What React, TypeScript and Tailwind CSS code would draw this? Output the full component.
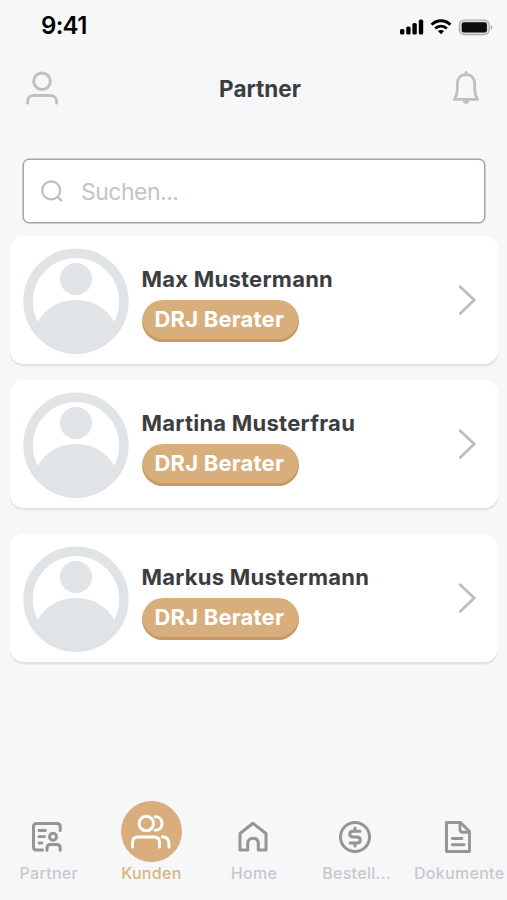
import type { ReactNode } from "react";

const partners = [
  { name: "Max Mustermann", role: "DRJ Berater", spacing: "mt-[13px]" },
  { name: "Martina Musterfrau", role: "DRJ Berater", spacing: "mt-[16px]" },
  { name: "Markus Mustermann", role: "DRJ Berater", spacing: "mt-[26px]" },
];

function StatusBar() {
  return (
    <div className="flex h-[52px] items-center justify-between pl-[41px] pr-[14px] text-black">
      <span className="text-[24px] font-semibold leading-none tracking-[-0.7px]">9:41</span>
      <div className="flex items-center pt-[2px]">
        <svg width="26" height="18" viewBox="0 0 26 18" fill="currentColor">
          <rect x="1" y="11" width="4.4" height="5.6" rx="1.6" />
          <rect x="7.2" y="8.4" width="4.4" height="8.2" rx="1.6" />
          <rect x="13.4" y="5" width="4.4" height="11.6" rx="1.6" />
          <rect x="19.8" y="1.6" width="4.4" height="15" rx="1.6" />
        </svg>
        <svg className="ml-[5px]" width="22" height="18" viewBox="0 0 22 18" fill="none" stroke="currentColor">
          <path d="M1.6 6.8C6.8 1.4 15.2 1.4 20.4 6.8" strokeWidth="2.9" />
          <path d="M5.2 10.5C8.4 7.2 13.6 7.2 16.8 10.5" strokeWidth="2.8" />
          <path d="M7.9 13.1C9.7 11.5 12.3 11.5 14.1 13.1L11 16.3Z" fill="currentColor" stroke="none" />
        </svg>
        <svg className="ml-[6px]" width="35" height="18" viewBox="0 0 35 18">
          <rect x="1.3" y="2" width="30" height="14.6" rx="4.8" fill="#d9dadb" stroke="#a9aaab" strokeWidth="1.1" />
          <rect x="3.7" y="4.2" width="25.2" height="10.2" rx="2.2" fill="#0c0c0c" />
          <path d="M32.8 7V12C34.8 11 34.8 8 32.8 7Z" fill="#a9aaab" />
        </svg>
      </div>
    </div>
  );
}

function Header() {
  return (
    <header className="flex h-[72px] items-center justify-between pl-[25px] pr-[27px] text-[#bfc0c1]">
      <svg width="34" height="34" viewBox="0 0 34 34" fill="none" stroke="currentColor" strokeWidth="3">
        <circle cx="17" cy="10.3" r="8.3" />
        <path d="M2.6 32V30.5C2.6 26.8 5.2 24.6 8.6 24.6H25.4C28.8 24.6 31.6 26.8 31.6 30.5V32" strokeLinecap="round" />
      </svg>
      <h1 className="ml-[9px] pt-[2px] text-[22.5px] font-bold leading-none text-[#3c3d3e]">Partner</h1>
      <svg width="28" height="34" viewBox="0 0 28 34" fill="none" stroke="currentColor" strokeWidth="2.8" strokeLinejoin="round">
        <path d="M14 3.6C8 3.6 5.3 8 5.3 13V18.5C5.3 22.5 4.2 25.5 2.4 28.4H25.6C23.8 25.5 22.7 22.5 22.7 18.5V13C22.7 8 20 3.6 14 3.6Z" />
        <path d="M14 1.5V4" strokeLinecap="round" />
        <path d="M10.5 29.5H17.5C17.2 31.6 16 32.8 14 32.8C12 32.8 10.8 31.6 10.5 29.5Z" fill="currentColor" stroke="none" />
      </svg>
    </header>
  );
}

function SearchField() {
  return (
    <div className="ml-[23px] mt-[35px] flex h-[64px] w-[462px] items-center rounded-[6px] border border-[#a2a4a6] bg-white pl-[16px] shadow-[0_0_0_0.5px_#a2a4a6]">
      <svg width="24" height="24" viewBox="0 0 24 24" fill="none" stroke="#bdbebf" strokeWidth="2.2">
        <circle cx="11.2" cy="11.4" r="9" />
        <path d="M17.6 17.8L22 22.2" strokeWidth="2.5" />
      </svg>
      <span className="ml-[17px] pt-[3px] text-[23px] leading-none tracking-[-0.5px] text-[#c3c4c5]">Suchen...</span>
    </div>
  );
}

function Avatar() {
  return (
    <svg width="106" height="106" viewBox="0 0 106 106" fill="#e0e4e6">
      <circle cx="53" cy="53.3" r="48" fill="none" stroke="#e0e4e6" strokeWidth="9.4" />
      <circle cx="53" cy="31" r="16" />
      <path d="M14 75C22 60 36 52 53 52C70 52 84 60 92 75C86 91 71 101 53 101C35 101 20 91 14 75Z" />
    </svg>
  );
}

function PartnerCard({ name, role, spacing }: (typeof partners)[number]) {
  return (
    <div className={`${spacing} mx-[10px] flex h-[128px] w-[488px] items-center rounded-[14px] bg-white pl-[13px] pr-[20px] pt-[2px] shadow-[0_2.5px_0_#e0e5e6]`}>
      <Avatar />
      <div className="ml-[12.5px] flex flex-col items-start">
        <span className="whitespace-nowrap pt-[6px] text-[22px] font-bold leading-[26px] tracking-[0.25px] text-[#3c3d3f]">{name}</span>
        <span className="mt-[8px] flex h-[42px] w-[157.5px] items-center justify-center whitespace-nowrap rounded-full bg-[#d8ae7c] pb-[3px] pr-[2px] text-[22px] font-bold tracking-[0.2px] text-white shadow-[inset_0_-3px_1px_#c69967]">
          {role}
        </span>
      </div>
      <svg className="mb-[2px] ml-auto" width="20" height="32" viewBox="0 0 20 32" fill="none" stroke="#bcbdbe" strokeWidth="2.8" strokeLinecap="round">
        <path d="M2.2 2.8L16.2 16L2.2 29.4" />
      </svg>
    </div>
  );
}

function TabItem({ label, active, children }: { label: string; active?: boolean; children: ReactNode }) {
  return (
    <div className="flex flex-col items-center">
      <div className={active ? "flex size-[61px] items-center justify-center rounded-full bg-[#d8ae7c] text-white" : "flex h-[61px] items-center justify-center pt-[10px] text-[#949596]"}>
        {children}
      </div>
      <span className={`mt-[1px] mr-[1px] whitespace-nowrap text-[16px] font-medium leading-[20px] tracking-[0.3px] ${active ? "text-[#d9b383]" : "text-[#c8c9cb]"}`}>{label}</span>
    </div>
  );
}

function TabBar() {
  return (
    <nav className="-mr-[4px] -ml-[2px] mt-auto grid h-[99px] grid-cols-5">
      <TabItem label="Partner">
        <svg className="mr-[4px]" width="32" height="32" viewBox="0 0 32 32" fill="none" stroke="currentColor" strokeWidth="3" strokeLinecap="round" strokeLinejoin="round">
          <path d="M29.2 9.5V5.5Q29.2 2.5 26.2 2.5H5.5Q2.5 2.5 2.5 5.5V26Q2.5 29 5.5 29H11.5" />
          <path d="M8 9.5H14.5M8 15.7H13.5M8 22H11" strokeWidth="2.8" />
          <circle cx="22" cy="15.7" r="3.5" />
          <path d="M16 29.2V27Q16 23.5 19.5 23.5H25.7Q29.2 23.5 29.2 27V29.2" />
        </svg>
      </TabItem>
      <TabItem label="Kunden" active>
        <svg className="mr-[2px]" width="42" height="36" viewBox="0 0 42 36" fill="none" stroke="currentColor" strokeWidth="3" strokeLinecap="round">
          <circle cx="16.3" cy="9.5" r="7.2" />
          <path d="M25.2 2.7C29.5 2.7 32 5.7 32 9.5C32 13.3 29.5 16.3 25.2 16.3" />
          <path d="M2.5 33V28.5Q2.5 23 8 23H24Q29.5 23 29.5 28.5V33" />
          <path d="M32.5 22.8C37 23.2 39 26 39 30V33" />
        </svg>
      </TabItem>
      <TabItem label="Home">
        <svg className="mr-[3px]" width="32" height="32" viewBox="0 0 32 32" fill="none" stroke="currentColor" strokeWidth="3" strokeLinejoin="round">
          <path d="M3 12.5L16 2.3L29 12.5V29H21.3V22.5C21.3 19 19 17.3 16 17.3C13 17.3 10.7 19 10.7 22.5V29H3Z" />
        </svg>
      </TabItem>
      <TabItem label="Bestell...">
        <svg className="mr-[4px]" width="34" height="34" viewBox="0 0 34 34" fill="none" stroke="currentColor" strokeWidth="3" strokeLinecap="round" strokeLinejoin="round">
          <circle cx="17" cy="17" r="14.5" />
          <path d="M22 11.2H15.3Q11.7 11.2 11.7 14.1Q11.7 17 15.3 17H18.7Q22.3 17 22.3 20Q22.3 23 18.7 23H12" />
          <path d="M17 8V11M17 23V26" />
        </svg>
      </TabItem>
      <TabItem label="Dokumente">
        <svg className="mr-[3px]" width="28" height="34" viewBox="0 0 28 34" fill="none" stroke="currentColor" strokeWidth="2.9" strokeLinejoin="round">
          <path d="M2.5 2.5H16.5L25.5 11.5V31.5H2.5Z" />
          <path d="M16 2.5V9.5Q16 12.2 18.7 12.2H25.5" />
          <path d="M8.3 18.5H18M8.3 24.8H20" strokeLinecap="round" />
        </svg>
      </TabItem>
    </nav>
  );
}

export default function App() {
  return (
    <main className="flex h-[900px] w-[507px] flex-col overflow-hidden bg-[#f6f7f9] font-['Inter',sans-serif]">
      <StatusBar />
      <Header />
      <SearchField />
      {partners.map((partner) => (
        <PartnerCard key={partner.name} {...partner} />
      ))}
      <TabBar />
    </main>
  );
}
